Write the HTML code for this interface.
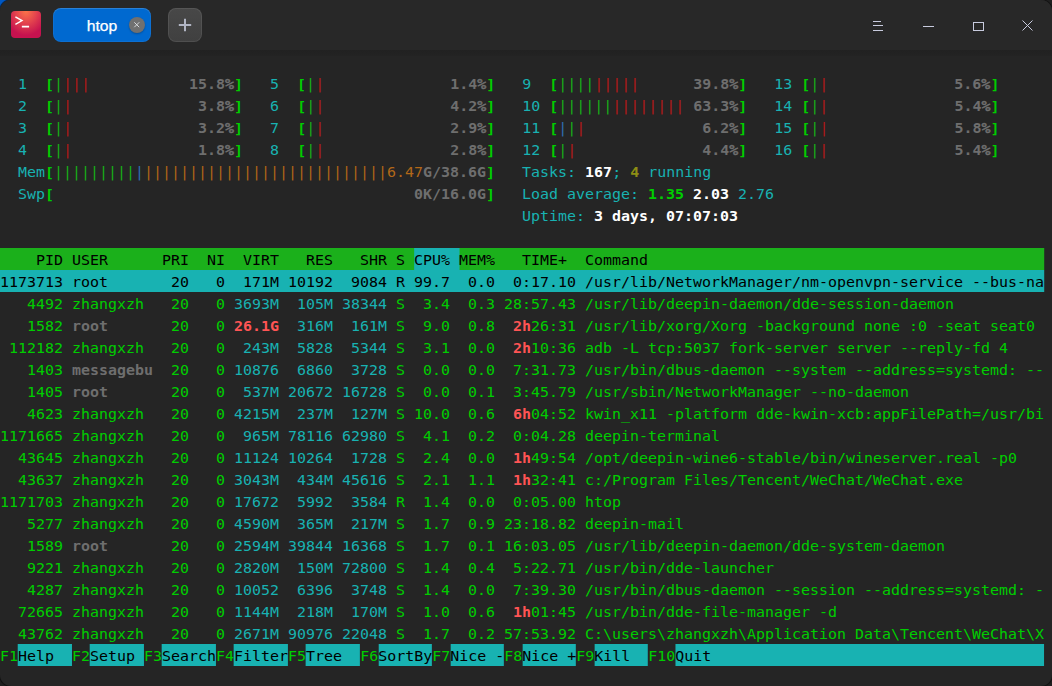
<!DOCTYPE html>
<html lang="en">
<head>
<meta charset="utf-8">
<title>htop</title>
<style>
html,body{margin:0;padding:0;}
body{width:1052px;height:686px;overflow:hidden;background:#1f1f1f;position:relative;font-family:"Liberation Sans",sans-serif;}
#tl{position:absolute;left:0;top:0;width:14px;height:14px;background:#0058c4;}
#win{position:absolute;left:0;top:0;width:1052px;height:686px;background:#252525;border-radius:11px;overflow:hidden;box-shadow:0 0 0 1px rgba(10,10,10,0.6);}
#bar{position:absolute;left:0;top:0;width:1052px;height:50px;background:#282828;}
#appicon{position:absolute;left:11.2px;top:11.4px;width:29.7px;height:26.9px;border-radius:4px;background:radial-gradient(ellipse 70% 90% at 50% 0%,#fb7449 0%,#e3434e 50%,#c6124f 100%);}
#tab{position:absolute;left:53px;top:8px;width:98px;height:34px;border-radius:8px;background:#0069d0;box-shadow:inset 0 1px 0 rgba(255,255,255,0.12),inset 0 0 0 1px rgba(255,255,255,0.05);}
#tab .t{position:absolute;left:0;width:98px;top:1px;line-height:34px;text-align:center;color:#fff;font-size:14.6px;transform:scaleX(1.075);-webkit-text-stroke:0.25px #fff;}
#tab .x{position:absolute;left:76.2px;top:9.1px;width:15.5px;height:15.5px;border-radius:8px;background:#707070;box-shadow:0 1px 2px rgba(0,0,0,0.25);}
#plus{position:absolute;left:168px;top:8px;width:34px;height:34px;border-radius:8px;background:linear-gradient(#484848,#404040);box-shadow:inset 0 0 0 1px rgba(255,255,255,0.08);}
#band{position:absolute;left:0;top:50px;width:1052px;height:6px;background:linear-gradient(#212121,#232323);}
#term{position:absolute;left:0;top:50px;width:942.81px;transform:scaleX(1.107327);transform-origin:0 0;font-family:"DejaVu Sans Mono","Liberation Mono",monospace;font-size:13.5px;color:#00cd00;}
.r{height:22px;line-height:24px;white-space:pre;overflow:hidden;}
.hs,.fl{display:inline-block;height:22px;vertical-align:top;}
.c{color:#18b2b2;}
.g{color:#18b218;}
.rd{color:#b21818;}
.b{color:#3070b4;}
.o{color:#b26818;}
.k{color:#6e6e6e;font-weight:bold;}
.kp{color:#6e6e6e;-webkit-text-stroke:0.55px #6e6e6e;}
.bg{color:#00cd00;font-weight:bold;}
.br{position:relative;top:1px;}
.w{color:#fff;font-weight:bold;}
.y{color:#8e8e14;font-weight:bold;}
.lr{color:#ff5454;font-weight:bold;}
.hd{background:#1bb01b;color:#000;}
.hs{background:#18b2b2;}
.sel{background:#18b2b2;color:#000;}
.fl{background:#18b2b2;color:#000;}
svg{position:absolute;overflow:visible;}
</style>
</head>
<body>
<div id="tl"></div>
<div id="win">
<div id="bar">
<div id="appicon"><svg width="30" height="27" viewBox="0 0 30 27" style="left:0;top:0"><path d="M4.4 5.9 L11 9.6 L4.4 13.3" fill="none" stroke="#fff" stroke-width="1.4"/><path d="M10.85 15.65 H18.1" stroke="#fff" stroke-width="1.9"/></svg></div>
<div id="tab"><div class="t">htop</div><div class="x"><svg width="16" height="16" viewBox="0 0 16 16" style="left:0;top:0"><path d="M5.3 5.3 L10.2 10.2 M10.2 5.3 L5.3 10.2" stroke="#dcdee2" stroke-width="0.95"/></svg></div></div>
<div id="plus"><svg width="34" height="34" viewBox="0 0 34 34" style="left:0;top:0"><path d="M17 10.8 V23.2 M10.8 17 H23.2" stroke="#b0b4c2" stroke-width="2"/></svg></div>
<svg width="1052" height="50" viewBox="0 0 1052 50" style="left:0;top:0" fill="none" stroke="#c8cbde" stroke-width="1">
<path d="M873 21.5 H881 M873 25.5 H883 M873 30.5 H883"/>
<path d="M923 26.5 H934"/>
<rect x="973.5" y="22.5" width="10" height="8"/>
<path d="M1022.5 20.5 L1032.5 30.5 M1032.5 20.5 L1022.5 30.5" stroke-width="1"/>
</svg>
</div>
<div id="band"></div>
<div id="term">
<div class="r"></div>
<div class="r">  <span class="c">1  </span><span class="bg br">[</span><span class="g">|</span><span class="rd">|||</span>           <span class="k">15.8</span><span class="kp">%</span><span class="bg br">]</span>   <span class="c">5  </span><span class="bg br">[</span><span class="g">|</span><span class="rd">|</span>              <span class="k">1.4</span><span class="kp">%</span><span class="bg br">]</span>   <span class="c">9  </span><span class="bg br">[</span><span class="g">||||</span><span class="rd">|||||</span>      <span class="k">39.8</span><span class="kp">%</span><span class="bg br">]</span>   <span class="c">13 </span><span class="bg br">[</span><span class="g">|</span><span class="rd">|</span>              <span class="k">5.6</span><span class="kp">%</span><span class="bg br">]</span></div>
<div class="r">  <span class="c">2  </span><span class="bg br">[</span><span class="g">|</span><span class="rd">|</span>              <span class="k">3.8</span><span class="kp">%</span><span class="bg br">]</span>   <span class="c">6  </span><span class="bg br">[</span><span class="g">|</span><span class="rd">|</span>              <span class="k">4.2</span><span class="kp">%</span><span class="bg br">]</span>   <span class="c">10 </span><span class="bg br">[</span><span class="g">||||||</span><span class="rd">||||||||</span> <span class="k">63.3</span><span class="kp">%</span><span class="bg br">]</span>   <span class="c">14 </span><span class="bg br">[</span><span class="g">|</span><span class="rd">|</span>              <span class="k">5.4</span><span class="kp">%</span><span class="bg br">]</span></div>
<div class="r">  <span class="c">3  </span><span class="bg br">[</span><span class="g">|</span><span class="rd">|</span>              <span class="k">3.2</span><span class="kp">%</span><span class="bg br">]</span>   <span class="c">7  </span><span class="bg br">[</span><span class="g">|</span><span class="rd">|</span>              <span class="k">2.9</span><span class="kp">%</span><span class="bg br">]</span>   <span class="c">11 </span><span class="bg br">[</span><span class="b">|</span><span class="g">|</span><span class="rd">|</span>             <span class="k">6.2</span><span class="kp">%</span><span class="bg br">]</span>   <span class="c">15 </span><span class="bg br">[</span><span class="g">|</span><span class="rd">|</span>              <span class="k">5.8</span><span class="kp">%</span><span class="bg br">]</span></div>
<div class="r">  <span class="c">4  </span><span class="bg br">[</span><span class="g">|</span><span class="rd">|</span>              <span class="k">1.8</span><span class="kp">%</span><span class="bg br">]</span>   <span class="c">8  </span><span class="bg br">[</span><span class="g">|</span><span class="rd">|</span>              <span class="k">2.8</span><span class="kp">%</span><span class="bg br">]</span>   <span class="c">12 </span><span class="bg br">[</span><span class="g">|</span><span class="rd">|</span>              <span class="k">4.4</span><span class="kp">%</span><span class="bg br">]</span>   <span class="c">16 </span><span class="bg br">[</span><span class="g">|</span><span class="rd">|</span>              <span class="k">5.4</span><span class="kp">%</span><span class="bg br">]</span></div>
<div class="r">  <span class="c">Mem</span><span class="bg br">[</span><span class="g">|||||||||</span><span class="b">|</span><span class="o">|||||||||||||||||||||||||||6.47</span><span class="k">G/38.6G</span><span class="bg br">]</span>   <span class="c">Tasks: </span><span class="w">167</span><span class="c">; </span><span class="y">4</span><span class="c"> running</span></div>
<div class="r">  <span class="c">Swp</span><span class="bg br">[</span>                                        <span class="k">0K/16.0G</span><span class="bg br">]</span>   <span class="c">Load average: </span><span class="bg">1.35</span> <span class="w">2.03</span> <span class="c">2.76</span></div>
<div class="r">                                                          <span class="c">Uptime: </span><span class="w">3 days, 07:07:03</span></div>
<div class="r"></div>
<div class="r hd">    PID USER      PRI  NI  VIRT   RES   SHR S <span class="hs">CPU% </span>MEM%   TIME+  Command                                            </div>
<div class="r sel">1173713 root       20   0  171M 10192  9084 R 99.7  0.0  0:17.10 /usr/lib/NetworkManager/nm-openvpn-service --bus-na</div>
<div class="r">   4492 zhangxzh   20   0 <span class="c">3693M</span> <span class="c"> 105M</span> <span class="c">38344</span> S  3.4  0.3 28:57.43 /usr/lib/deepin-daemon/dde-session-daemon</div>
<div class="r">   1582 <span class="k">root     </span>  20   0 <span class="lr">26.1G</span> <span class="c"> 316M</span> <span class="c"> 161M</span> S  9.0  0.8  <span class="lr">2h</span>26:31 /usr/lib/xorg/Xorg -background none :0 -seat seat0</div>
<div class="r"> 112182 zhangxzh   20   0 <span class="c"> 243M</span> <span class="c"> 5828</span> <span class="c"> 5344</span> S  3.1  0.0  <span class="lr">2h</span>10:36 adb -L tcp:5037 fork-server server --reply-fd 4</div>
<div class="r">   1403 <span class="k">messagebu</span>  20   0 <span class="c">10876</span> <span class="c"> 6860</span> <span class="c"> 3728</span> S  0.0  0.0  7:31.73 /usr/bin/dbus-daemon --system --address=systemd: --</div>
<div class="r">   1405 <span class="k">root     </span>  20   0 <span class="c"> 537M</span> <span class="c">20672</span> <span class="c">16728</span> S  0.0  0.1  3:45.79 /usr/sbin/NetworkManager --no-daemon</div>
<div class="r">   4623 zhangxzh   20   0 <span class="c">4215M</span> <span class="c"> 237M</span> <span class="c"> 127M</span> S 10.0  0.6  <span class="lr">6h</span>04:52 kwin_x11 -platform dde-kwin-xcb:appFilePath=/usr/bi</div>
<div class="r">1171665 zhangxzh   20   0 <span class="c"> 965M</span> <span class="c">78116</span> <span class="c">62980</span> S  4.1  0.2  0:04.28 deepin-terminal</div>
<div class="r">  43645 zhangxzh   20   0 <span class="c">11124</span> <span class="c">10264</span> <span class="c"> 1728</span> S  2.4  0.0  <span class="lr">1h</span>49:54 /opt/deepin-wine6-stable/bin/wineserver.real -p0</div>
<div class="r">  43637 zhangxzh   20   0 <span class="c">3043M</span> <span class="c"> 434M</span> <span class="c">45616</span> S  2.1  1.1  <span class="lr">1h</span>32:41 c:/Program Files/Tencent/WeChat/WeChat.exe</div>
<div class="r">1171703 zhangxzh   20   0 <span class="c">17672</span> <span class="c"> 5992</span> <span class="c"> 3584</span> R  1.4  0.0  0:05.00 htop</div>
<div class="r">   5277 zhangxzh   20   0 <span class="c">4590M</span> <span class="c"> 365M</span> <span class="c"> 217M</span> S  1.7  0.9 23:18.82 deepin-mail</div>
<div class="r">   1589 <span class="k">root     </span>  20   0 <span class="c">2594M</span> <span class="c">39844</span> <span class="c">16368</span> S  1.7  0.1 16:03.05 /usr/lib/deepin-daemon/dde-system-daemon</div>
<div class="r">   9221 zhangxzh   20   0 <span class="c">2820M</span> <span class="c"> 150M</span> <span class="c">72800</span> S  1.4  0.4  5:22.71 /usr/bin/dde-launcher</div>
<div class="r">   4287 zhangxzh   20   0 <span class="c">10052</span> <span class="c"> 6396</span> <span class="c"> 3748</span> S  1.4  0.0  7:39.30 /usr/bin/dbus-daemon --session --address=systemd: -</div>
<div class="r">  72665 zhangxzh   20   0 <span class="c">1144M</span> <span class="c"> 218M</span> <span class="c"> 170M</span> S  1.0  0.6  <span class="lr">1h</span>01:45 /usr/bin/dde-file-manager -d</div>
<div class="r">  43762 zhangxzh   20   0 <span class="c">2671M</span> <span class="c">90976</span> <span class="c">22048</span> S  1.7  0.2 57:53.92 C:\users\zhangxzh\Application Data\Tencent\WeChat\X</div>
<div class="r">F1<span class="fl">Help  </span>F2<span class="fl">Setup </span>F3<span class="fl">Search</span>F4<span class="fl">Filter</span>F5<span class="fl">Tree  </span>F6<span class="fl">SortBy</span>F7<span class="fl">Nice -</span>F8<span class="fl">Nice +</span>F9<span class="fl">Kill  </span>F10<span class="fl">Quit                                     </span></div>
</div>
</div>
</body>
</html>
